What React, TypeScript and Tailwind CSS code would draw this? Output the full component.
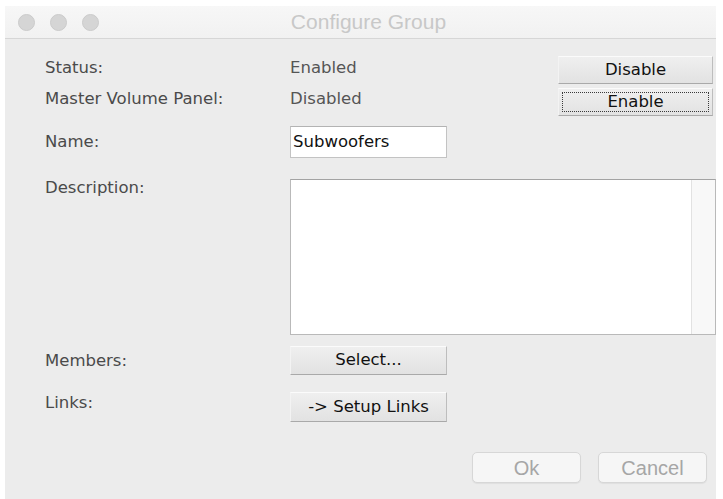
import type { ReactNode } from "react";

// Classic Swing-on-Mac push button with a raised bevel
function BevelButton({ children, focused = false, className = "" }: { children: ReactNode; focused?: boolean; className?: string }) {
  return (
    <button
      className={`relative flex items-center justify-center bg-gradient-to-b from-[#efefef] to-[#e2e2e2] border border-t-[#fbfbfb] border-l-[#f3f3f3] border-r-[#bdbdbd] border-b-[#a9a9a9] text-[16.5px] text-[#111] ${className}`}
    >
      {focused && <span className="absolute inset-[3px] border border-dotted border-[#3a3a3a]" />}
      <span className="relative">{children}</span>
    </button>
  );
}

function DialogButton({ children }: { children: ReactNode }) {
  return (
    <button className="h-[31px] w-[109px] rounded-[5px] border border-[#d7d7d7] bg-[#f6f6f6] shadow-[0_1px_1px_rgba(0,0,0,0.06)] font-['Liberation_Sans',Arial,sans-serif] text-[20px] text-[#a6a6a6]">
      {children}
    </button>
  );
}

export default function App() {
  return (
    <div className="w-[723px] h-[499px] bg-white pl-[5px] pt-[6px] overflow-hidden font-['DejaVu_Sans',Verdana,sans-serif]">
      <div className="w-[711px] h-[493px] flex flex-col bg-[#ececec]">
        {/* Title bar */}
        <div className="h-[33px] shrink-0 flex items-center bg-gradient-to-b from-[#f7f7f7] to-[#f1f1f1] border-b border-[#d6d6d6] relative">
          <div className="flex items-center gap-[15px] pl-[13px]">
            <span className="w-[17px] h-[17px] rounded-full bg-[#d5d5d5] border border-[#cbcbcb]" />
            <span className="w-[17px] h-[17px] rounded-full bg-[#d5d5d5] border border-[#cbcbcb]" />
            <span className="w-[17px] h-[17px] rounded-full bg-[#d5d5d5] border border-[#cbcbcb]" />
          </div>
          <div className="absolute inset-0 flex items-center justify-center pl-[16px] font-['Liberation_Sans',Arial,sans-serif] text-[21px] text-[#c8c8c8]">
            Configure Group
          </div>
        </div>

        {/* Form */}
        <div className="flex-1 flex flex-col pl-[40px] pt-[17px] text-[16.5px] text-[#4a4a4a]">
          <div className="flex">
            <div className="flex flex-col">
              <div className="flex h-[24px] items-center">
                <span className="w-[245px]">Status:</span>
                <span className="text-[#555]">Enabled</span>
              </div>
              <div className="flex h-[24px] items-center mt-[7px]">
                <span className="w-[245px]">Master Volume Panel:</span>
                <span className="text-[#555]">Disabled</span>
              </div>
            </div>
            <div className="ml-auto mr-[3px] flex flex-col gap-[4px]">
              <BevelButton className="w-[155px] h-[28px]">Disable</BevelButton>
              <BevelButton focused className="w-[155px] h-[28px]">Enable</BevelButton>
            </div>
          </div>

          <div className="flex items-center mt-[10px]">
            <span className="w-[245px]">Name:</span>
            <div className="w-[157px] h-[32px] flex items-center pl-[2px] bg-white border border-[#c3c3c3] border-t-[#b3b3b3] text-[#111]">
              Subwoofers
            </div>
          </div>

          <div className="flex mt-[21px]">
            <span className="w-[245px] leading-[18px]">Description:</span>
            <div className="flex-1 h-[156px] flex bg-white border border-[#b9b9b9] border-t-[#a3a3a3]">
              <div className="flex-1" />
              <div className="w-[24px] bg-[#f8f8f8] border-l border-[#e2e2e2]" />
            </div>
          </div>

          <div className="flex items-center mt-[11px]">
            <span className="w-[245px] mt-[2px]">Members:</span>
            <BevelButton className="w-[157px] h-[29px]">Select...</BevelButton>
          </div>

          <div className="flex items-center mt-[17px]">
            <span className="w-[245px] -mt-[8px]">Links:</span>
            <BevelButton className="w-[157px] h-[30px]">-&gt; Setup Links</BevelButton>
          </div>

          <div className="flex justify-end gap-[17px] mt-[30px] pr-[9px]">
            <DialogButton>Ok</DialogButton>
            <DialogButton>Cancel</DialogButton>
          </div>
        </div>
      </div>
    </div>
  );
}
